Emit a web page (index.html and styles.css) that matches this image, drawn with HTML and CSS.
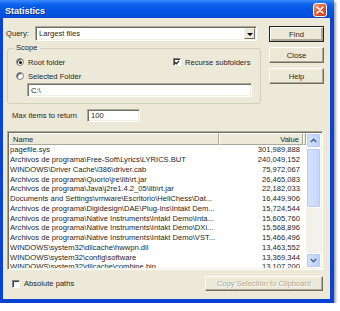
FILE: index.html
```html
<!DOCTYPE html>
<html lang="es">
<head>
    <meta charset="UTF-8">
    <title>Statistics</title>
    <link rel="stylesheet" href="styles.css">
</head>
<body>
    <div class="window">
        <div class="titlebar">
            <span class="title">Statistics</span>
            <span class="close-btn">
                <svg width="8" height="8" viewBox="0 0 8 8"><path d="M1 1L7 7M7 1L1 7" stroke="#fff" stroke-width="1.6" stroke-linecap="round"/></svg>
            </span>
        </div>

        <div class="client">
            <div class="top">
                <div class="left">
                    <div class="query-row">
                        <span class="query-label">Query:</span>
                        <div class="combo sunken">
                            <span>Largest files</span>
                            <span class="drop-btn"><span class="tri"></span></span>
                        </div>
                    </div>

                    <fieldset class="scope">
                        <legend>Scope</legend>
                        <div class="scope-row">
                            <span class="opt"><span class="radio on"></span>Root folder</span>
                            <span class="opt"><span class="check">
                                <svg width="7" height="7" viewBox="0 0 7 7"><path d="M1 3.2L2.8 5L6 1.6" stroke="#222" stroke-width="1.4" fill="none"/></svg>
                            </span>Recurse subfolders</span>
                        </div>
                        <div class="scope-row">
                            <span class="opt"><span class="radio"></span>Selected Folder</span>
                        </div>
                        <div class="path-box sunken">C:\</div>
                    </fieldset>

                    <div class="max-row">
                        <span class="max-label">Max items to return</span>
                        <div class="num-box sunken">100</div>
                    </div>
                </div>

                <div class="buttons">
                    <div class="btn default">Find</div>
                    <div class="btn">Close</div>
                    <div class="btn">Help</div>
                </div>
            </div>

            <div class="listview sunken">
                <div class="lv-main">
                    <div class="lv-header">
                        <div class="hd hd-name">Name</div>
                        <div class="hd hd-value">Value</div>
                        <div class="hd hd-rest"></div>
                    </div>
                    <div class="lv-rows">
                        <div class="row"><span class="name">pagefile.sys</span><span class="val">301,989,888</span></div>
                        <div class="row"><span class="name">Archivos de programa\Free-Soft\Lyrics\LYRICS.BUT</span><span class="val">240,049,152</span></div>
                        <div class="row"><span class="name">WINDOWS\Driver Cache\i386\driver.cab</span><span class="val">75,972,067</span></div>
                        <div class="row"><span class="name">Archivos de programa\Quorio\jre\lib\rt.jar</span><span class="val">26,465,083</span></div>
                        <div class="row"><span class="name">Archivos de programa\Java\j2re1.4.2_05\lib\rt.jar</span><span class="val">22,182,033</span></div>
                        <div class="row"><span class="name">Documents and Settings\vmware\Escritorio\HellChess\Dat...</span><span class="val">16,449,906</span></div>
                        <div class="row"><span class="name">Archivos de programa\Digidesign\DAE\Plug-Ins\Intakt Dem...</span><span class="val">15,724,544</span></div>
                        <div class="row"><span class="name">Archivos de programa\Native Instruments\Intakt Demo\Inta...</span><span class="val">15,605,760</span></div>
                        <div class="row"><span class="name">Archivos de programa\Native Instruments\Intakt Demo\DXi...</span><span class="val">15,568,896</span></div>
                        <div class="row"><span class="name">Archivos de programa\Native Instruments\Intakt Demo\VST...</span><span class="val">15,466,496</span></div>
                        <div class="row"><span class="name">WINDOWS\system32\dllcache\hwwpn.dll</span><span class="val">13,463,552</span></div>
                        <div class="row"><span class="name">WINDOWS\system32\config\software</span><span class="val">13,369,344</span></div>
                        <div class="row"><span class="name">WINDOWS\system32\dllcache\combine.bin</span><span class="val">13,107,200</span></div>
                    </div>
                </div>
                <div class="scrollbar">
                    <div class="sb-btn">
                        <svg width="7" height="5" viewBox="0 0 7 5"><path d="M0.8 4L3.5 1.3L6.2 4" stroke="#4d6185" stroke-width="1.5" fill="none"/></svg>
                    </div>
                    <div class="sb-thumb"></div>
                    <div class="sb-track"></div>
                    <div class="sb-btn">
                        <svg width="7" height="5" viewBox="0 0 7 5"><path d="M0.8 1L3.5 3.7L6.2 1" stroke="#4d6185" stroke-width="1.5" fill="none"/></svg>
                    </div>
                </div>
            </div>

            <div class="bottom-row">
                <span class="opt"><span class="check flat"></span>Absolute paths</span>
                <div class="btn disabled copy">Copy Selection to Clipboard</div>
            </div>
        </div>
    </div>
</body>
</html>
```

FILE: styles.css
```css
* {
    box-sizing: border-box;
}
body {
    margin: 0;
    background: #fff;
    font-family: "Liberation Sans", Arial, sans-serif;
    font-size: 7.6px;
    color: #262626;
}
.window {
    width: 334px;
    height: 303px;
    display: flex;
    flex-direction: column;
    background: #0843d6;
    box-shadow: 2px 2px 2px rgba(0,0,0,0.35);
}
.titlebar {
    height: 18px;
    flex: none;
    display: flex;
    align-items: center;
    justify-content: space-between;
    padding: 2px 7px 0 5px;
    background: linear-gradient(#3b8cfb 0%, #0d61ea 25%, #0055e2 55%, #0052de 85%, #0a45cc 100%);
}
.title {
    color: #fff;
    font-weight: bold;
    font-size: 9px;
    margin-top: 2px;
    text-shadow: 1px 1px #0b2a8c;
}
.close-btn {
    width: 14px;
    height: 14px;
    display: flex;
    align-items: center;
    justify-content: center;
    border: 1px solid #fff;
    border-radius: 3px;
    background: linear-gradient(135deg, #ee9878 0%, #e05a35 50%, #c63c17 100%);
}
.client {
    flex: 1;
    margin: 0 4px 4px 3px;
    padding: 8px 6px 0 4px;
    background: #ece9d8;
    display: flex;
    flex-direction: column;
}

/* 3d edges */
.sunken {
    background: #fff;
    border: 1px solid;
    border-color: #aca899 #fff #fff #aca899;
    box-shadow: inset 1px 1px #716f64, inset -1px -1px #f1efe2;
}
.btn {
    height: 16px;
    display: flex;
    align-items: center;
    justify-content: center;
    background: #ece9d8;
    border: 1px solid;
    border-color: #fff #716f64 #716f64 #fff;
    box-shadow: inset -1px -1px #aca899;
    white-space: nowrap;
}
.btn.default {
    border-color: #222;
    box-shadow: inset 1px 1px #fff, inset -2px -2px #aca899;
}
.btn.disabled {
    color: #aca899;
    text-shadow: 1px 1px #fff;
}

.top {
    display: flex;
    gap: 11px;
}
.left {
    width: 251px;
    display: flex;
    flex-direction: column;
}
.query-row {
    display: flex;
    align-items: center;
    height: 15px;
}
.query-label {
    width: 29px;
    margin-left: -1px;
}
.combo {
    width: 222px;
    height: 15px;
    display: flex;
    align-items: center;
    justify-content: space-between;
    padding: 0 1px 0 3px;
}
.drop-btn {
    width: 11px;
    height: 11px;
    display: flex;
    align-items: center;
    justify-content: center;
    background: #ece9d8;
    border: 1px solid;
    border-color: #f1efe2 #716f64 #716f64 #f1efe2;
}
.tri {
    border: 3px solid transparent;
    border-top: 3px solid #000;
    border-bottom: 0;
    margin-top: 1px;
}

.scope {
    margin: 2px 0 0;
    padding: 4px 8px 5px 8px;
    border: 1px solid #d0d0bf;
    border-radius: 3px;
    height: 61px;
}
.scope legend {
    padding: 0 2px;
    margin-left: -2px;
    line-height: 10px;
}
.scope-row {
    display: grid;
    grid-template-columns: 157px auto;
    height: 10px;
    align-items: center;
    margin-bottom: 4px;
    white-space: nowrap;
}
.opt {
    display: flex;
    align-items: center;
    gap: 4px;
    white-space: nowrap;
}
.radio {
    width: 8px;
    height: 8px;
    border-radius: 50%;
    background: #fff;
    border: 1px solid #808080;
    box-shadow: inset 1px 1px #404040;
    display: flex;
    align-items: center;
    justify-content: center;
}
.radio.on::after {
    content: "";
    width: 3px;
    height: 3px;
    border-radius: 50%;
    background: #111;
}
.check {
    width: 8px;
    height: 8px;
    background: #fff;
    border: 1px solid;
    border-color: #808080 #fff #fff #808080;
    box-shadow: inset 1px 1px #404040;
    display: flex;
    align-items: center;
    justify-content: center;
}
.path-box {
    margin: -2px 0 0 11px;
    width: 225px;
    height: 14px;
    padding-left: 3px;
    display: flex;
    align-items: center;
}

.max-row {
    display: flex;
    align-items: center;
    margin-top: 5px;
    height: 13px;
}
.max-label {
    margin-left: 5px;
    width: 75px;
}
.num-box {
    width: 53px;
    height: 13px;
    padding-left: 3px;
    display: flex;
    align-items: center;
}

.buttons {
    width: 55px;
    display: flex;
    flex-direction: column;
    gap: 5px;
}

.listview {
    margin-top: 9px;
    width: 316px;
    height: 139px;
    display: flex;
    padding: 1px;
    overflow: hidden;
}
.lv-main {
    flex: 1;
    display: flex;
    flex-direction: column;
    overflow: hidden;
}
.lv-header {
    display: flex;
    height: 12px;
    flex: none;
}
.hd {
    background: #ece9d8;
    border: 1px solid;
    border-color: #fff #aca899 #aca899 #fff;
    display: flex;
    align-items: center;
}
.hd-name {
    width: 210px;
    padding-left: 3px;
}
.hd-value {
    width: 84px;
    justify-content: flex-end;
    padding-right: 3px;
}
.hd-rest {
    flex: 1;
}
.row {
    display: flex;
    height: 9.75px;
    align-items: center;
    white-space: nowrap;
}
.name {
    width: 210px;
    padding-left: 1px;
    overflow: hidden;
    text-overflow: ellipsis;
}
.val {
    width: 84px;
    text-align: right;
    padding-right: 3px;
}
.scrollbar {
    width: 15px;
    display: flex;
    flex-direction: column;
    background: #f3f1ec;
}
.sb-btn {
    height: 15px;
    display: flex;
    align-items: center;
    justify-content: center;
    background: linear-gradient(90deg, #d4e1fc, #bccffa);
    border: 1px solid #fff;
    border-radius: 2px;
    box-shadow: inset 0 0 0 1px #b8cbf5;
}
.sb-thumb {
    height: 60px;
    background: linear-gradient(90deg, #d8e4fd, #c3d4fb);
    border: 1px solid #fff;
    border-radius: 2px;
    box-shadow: inset 0 0 0 1px #b8cbf5;
}
.sb-track {
    flex: 1;
}

.bottom-row {
    display: flex;
    align-items: center;
    margin-top: 6px;
    height: 15px;
}
.bottom-row .opt {
    margin-left: 5px;
}
.copy {
    margin-left: auto;
    margin-right: 1px;
    width: 118px;
    height: 15px;
}
```
